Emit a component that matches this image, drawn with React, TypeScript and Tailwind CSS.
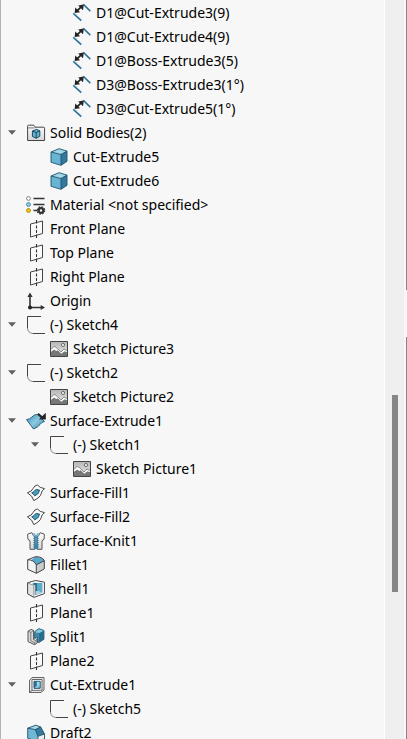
import { useState, type ReactNode } from "react";

type Kind =
  | "dimension" | "folder" | "body" | "material" | "plane" | "origin" | "sketch" | "picture"
  | "surfaceExtrude" | "surfaceFill" | "knit" | "fillet" | "shell" | "split" | "cut" | "draft";

type Feature = { label: string; kind: Kind; children?: Feature[] };

const dimensions: Feature[] = [
  { label: "D1@Cut-Extrude3(9)", kind: "dimension" },
  { label: "D1@Cut-Extrude4(9)", kind: "dimension" },
  { label: "D1@Boss-Extrude3(5)", kind: "dimension" },
  { label: "D3@Boss-Extrude3(1°)", kind: "dimension" },
  { label: "D3@Cut-Extrude5(1°)", kind: "dimension" },
];

const features: Feature[] = [
  {
    label: "Solid Bodies(2)",
    kind: "folder",
    children: [
      { label: "Cut-Extrude5", kind: "body" },
      { label: "Cut-Extrude6", kind: "body" },
    ],
  },
  { label: "Material <not specified>", kind: "material" },
  { label: "Front Plane", kind: "plane" },
  { label: "Top Plane", kind: "plane" },
  { label: "Right Plane", kind: "plane" },
  { label: "Origin", kind: "origin" },
  { label: "(-) Sketch4", kind: "sketch", children: [{ label: "Sketch Picture3", kind: "picture" }] },
  { label: "(-) Sketch2", kind: "sketch", children: [{ label: "Sketch Picture2", kind: "picture" }] },
  {
    label: "Surface-Extrude1",
    kind: "surfaceExtrude",
    children: [
      { label: "(-) Sketch1", kind: "sketch", children: [{ label: "Sketch Picture1", kind: "picture" }] },
    ],
  },
  { label: "Surface-Fill1", kind: "surfaceFill" },
  { label: "Surface-Fill2", kind: "surfaceFill" },
  { label: "Surface-Knit1", kind: "knit" },
  { label: "Fillet1", kind: "fillet" },
  { label: "Shell1", kind: "shell" },
  { label: "Plane1", kind: "plane" },
  { label: "Split1", kind: "split" },
  { label: "Plane2", kind: "plane" },
  { label: "Cut-Extrude1", kind: "cut", children: [{ label: "(-) Sketch5", kind: "sketch" }] },
  { label: "Draft2", kind: "draft" },
];

const drawings: Record<Kind, ReactNode> = {
  dimension: (
    <>
      <path d="M10.3 .3l7 6.8M.3 9.3l8 7.4" stroke="#2b7397" strokeWidth="1.6" />
      <path d="M3.5 7.3l5.5-5.2" stroke="#222" strokeWidth="1.8" />
      <path d="M10.8.6L10 6.2 5.2 1.4zM1.6 9l.7-5.6 4.8 4.8z" fill="#222" />
    </>
  ),
  folder: (
    <>
      <path d="M.6 16.5V2.2q0-1 1-1h4.6q1 0 1.4 1l.4 1h8.6q1 0 1 1v12.3z" fill="url(#grey)" stroke="#444" />
      <path d="M1.2 3.9h6.3" stroke="#555" strokeWidth=".8" />
      <path d="M5.4 7l4-1.6 3.4 1.4v5.4l-3.6 2-3.8-1.7z" fill="#67b0cf" stroke="#174b62" />
      <path d="M5.4 7l3.8 1.6 3.6-1.8M9.2 8.6v5.6" fill="none" stroke="#174b62" />
    </>
  ),
  body: (
    <>
      <path d="M1 4l8-3.3 8 2.4v10.2l-6 4-10-3z" fill="#69b3d3" />
      <path d="M1 4l8-3.3 8 2.4-6 3.4z" fill="#a3d7ea" />
      <path d="M11 6.5l6-3.4v10.2l-6 4z" fill="#34799c" />
      <path d="M1 4l8-3.3 8 2.4v10.2l-6 4-10-3zM1 4l10 2.5 6-3.4M11 6.5v10.8" fill="none" stroke="#1f536d" strokeWidth=".9" strokeLinejoin="round" />
    </>
  ),
  material: (
    <>
      <path d="M6.5 2.5H17.5M6.5 8.5H17.5M6.5 14.5h4" stroke="#333" strokeWidth="1.4" />
      <circle cx="1.5" cy="2.5" r="1.9" fill="#fff" stroke="#777" strokeWidth=".9" />
      <circle cx="1.5" cy="8.5" r="1.9" fill="#8dd3ee" stroke="#397f9d" strokeWidth=".9" />
      <circle cx="1.5" cy="14.5" r="1.9" fill="#ffcd00" stroke="#a47a00" strokeWidth=".9" />
      <circle cx="14" cy="14.5" r="2.3" fill="none" stroke="#333" strokeWidth="2.2" />
      <circle cx="14" cy="14.5" r="3.7" fill="none" stroke="#333" strokeWidth="1.2" strokeDasharray="1.6 1.3" />
    </>
  ),
  plane: (
    <>
      <path d="M3.5 4l12-3v12.5l-12 3.5z" fill="#fafafa" stroke="#444" />
      <path d="M9.5 0v3.5M9.5 5.5v3M9.5 10v3M9.5 14.5V18" stroke="#333" strokeWidth="1.1" />
    </>
  ),
  origin: (
    <>
      <path d="M3 4v11.5h11" fill="none" stroke="#333" strokeWidth="1.6" />
      <path d="M3 .5L5.6 5H.4zM18 15.5L13.7 18v-5z" fill="#333" />
      <circle cx="3" cy="15.5" r="2" fill="#222" />
    </>
  ),
  sketch: (
    <>
      <path d="M14 .5H.5V12" fill="none" stroke="#444" />
      <path d="M.5 12q.3 5 5.5 5.5" fill="none" stroke="#888" />
      <path d="M6 17.5h12" stroke="#444" />
    </>
  ),
  picture: (
    <>
      <path d="M.5 1.5h17v15H.5z" fill="url(#photo)" stroke="#444" />
      <path d="M1 9.5l3.3-3.3 2.2 1.6L11 12l3-3 3 1.6V16H1z" fill="#777" />
      <path d="M1 9.5l3.3-3.3 2.2 1.6L11 12l3-3 3 1.6v1.6l-2.4-1-3.3 2.5-3.6-3.4L6 11 4.3 9.4 1 11.8z" fill="#fff" />
      <path d="M1 9.5l3.3-3.3 2.2 1.6L11 12l3-3 3 1.6" fill="none" stroke="#555" strokeWidth=".6" />
      <circle cx="13" cy="5" r="1.6" fill="#eee" stroke="#555" strokeWidth=".8" />
    </>
  ),
  surfaceExtrude: (
    <>
      <path d="M-.5 7.5Q2.5 7.5 4.5 5.3T10 2.2L17.5 9.5q-2.5.2-4.5 3T6.5 17z" fill="url(#blue)" stroke="#2b6480" strokeLinejoin="round" />
      <path d="M11 1.8l4 3.5" stroke="#222" strokeWidth="1.9" />
      <path d="M18.8.8v6.8h-7z" fill="#222" />
    </>
  ),
  surfaceFill: (
    <>
      <path d="M.4 8.8Q5 7.4 6.2 4.4T10.6 1q1.8 3 6.9 3.6-3 2.2-3.4 5.2T6.8 16.6Q5.6 11.6.4 8.8z" fill="#fcfcfc" stroke="#444" strokeLinejoin="round" />
      <path d="M4.6 8.8Q7 8.2 7.8 6.4t5-.2Q11.8 7.6 11.4 9t-3.8 2.8q-.8-1.8-3-3z" fill="#4c9abb" stroke="#174c66" strokeWidth=".9" strokeLinejoin="round" />
    </>
  ),
  knit: (
    <>
      <path d="M.7 2.2L4.8.7q1.2 3 3 4.4v12.2H3V8.7L.9 7.3zM17.3 2.2L13.2.7q-1.2 3-3 4.4v12.2H15V8.7l2.1-1.4z" fill="url(#grey)" stroke="#555" strokeLinejoin="round" />
      <path d="M7 4l4 2.2-4 2.2 4 2.2-4 2.2 4 2.2-4 2M11 4L7 6.2l4 2.2-4 2.2 4 2.2-4 2.2 4 2" fill="none" stroke="#3581a4" strokeWidth="1.1" />
      <path d="M6.6 1.2L9 4.4l2.4-3.2" fill="none" stroke="#5aa9c8" strokeWidth="1.2" />
    </>
  ),
  fillet: (
    <>
      <path d="M.7 3.8l8-3.2q6.4 0 8.6 4v8.3L9.5 17.3l-8.8-4z" fill="#f3f3f3" />
      <path d="M9.3 7.5l8-3v8.4L9.5 17.3z" fill="#c9cccd" />
      <path d="M8.2.9q6.8-.3 9.1 4l-8.1 4Q8 6 4.5 4z" fill="#58a7c8" />
      <path d="M.7 3.8l8-3.2q6.4 0 8.6 4v8.3L9.5 17.3l-8.8-4zM.7 3.8Q6.5 3.5 9.3 8.8v8.5M9.3 8.8l8-4.1" fill="none" stroke="#444" strokeLinejoin="round" />
    </>
  ),
  shell: (
    <>
      <path d="M.6 2.8L8.6.5l8.8 1.7v11.4L6.8 17.4.6 13.8z" fill="#fff" />
      <path d="M.6 2.8l6.2 2.7v11.9L.6 13.8z" fill="#dfe1e2" />
      <path d="M7.5 2.8l7.7.4v9.6L8.2 15V5.4L5 4z" fill="#2a6e8f" />
      <path d="M10 3l5.2.2v9.6L10 10z" fill="#5aabcc" />
      <path d="M8.2 11.4l3-1 4 2.4-7 2.2z" fill="#a9d6e7" />
      <path d="M.6 2.8L8.6.5l8.8 1.7v11.4L6.8 17.4.6 13.8z" stroke="#444" strokeLinejoin="round" />
      <path d="M.6 2.8l6.2 2.7v11.9M8.2 15V5.4" stroke="#777" strokeWidth=".7" />
    </>
  ),
  split: (
    <>
      <path d="M7.6 3.6L12 .6l5 1.9v8.7l-5 3.4-1.6-.8V9.5l-2.8 1z" fill="#3d89ab" stroke="#1c5570" strokeWidth=".8" strokeLinejoin="round" />
      <path d="M12.2 5l4.4-2.2v8.1l-4.4 3.1z" fill="#2a6c8c" />
      <path d="M8.2 3.7L12 1.2l4.4 1.6L12.2 5l-1.4-.6-1.2.6z" fill="#8dcae0" />
      <path d="M1 3.2L4.2 1.4l2.4 1v9.2l1.8.8 2-1v3.4l-2.9 1.9L1 13.6z" fill="#dadbdc" stroke="#444" strokeWidth=".9" strokeLinejoin="round" />
      <path d="M1 3.2l2.8 1.2v8.4l3.8 1.8 2.8-1.6M3.8 4.4l2.8-2M7.6 14.6v2" stroke="#666" strokeWidth=".8" />
    </>
  ),
  cut: (
    <>
      <path d="M2.5 4.5L5 1.5h12V14l-3 2.5H2.5z" fill="#e6e6e6" stroke="#666" strokeLinejoin="round" />
      <path d="M5 3.5h10v10.8H5z" fill="#fff" stroke="#666" />
      <path d="M7 5.3h6.2v7H7z" fill="#2c7598" stroke="#295468" />
      <path d="M9.8 5.8h2.9v5.4l-2.9-1.7zM7.5 11.8l2.3-2 2.9 2z" fill="#98d6ed" />
      <path d="M2.5 4.5v12M2.5 16.5L5 14.3" stroke="#666" />
    </>
  ),
  draft: (
    <>
      <path d="M.7 4.2l8-3 5 1.8 3.8 7v5l-7 2.5-9.8-3.2z" fill="#6eb8d5" />
      <path d="M.7 4.2l8-3 5 1.8-5.4 2.6z" fill="#a7d9ea" />
      <path d="M8.3 5.6L13.7 3l3.8 7-6.6 2.3z" fill="#347b9e" />
      <path d="M10.9 12.3l6.6-2.3v5l-6.8 2.5z" fill="#eee" />
      <path d="M.7 4.2l8-3 5 1.8 3.8 7v5l-7 2.5-9.8-3.2zM.7 4.2l7.6 1.4 2.6 6.7v5.2M8.3 5.6L13.7 3M10.9 12.3l6.6-2.3" fill="none" stroke="#254f63" strokeWidth=".9" strokeLinejoin="round" />
    </>
  ),
};

function FeatureIcon({ kind }: { kind: Kind }) {
  return (
    <svg viewBox="0 0 18 18" className="size-[18px] shrink-0 overflow-visible" fill="none" aria-hidden="true">
      {drawings[kind]}
    </svg>
  );
}

function TreeNode({ feature }: { feature: Feature }) {
  const [open, setOpen] = useState(true);
  return (
    <li role="treeitem" aria-expanded={feature.children ? open : undefined}>
      <div className="flex h-6 items-center">
        {feature.children ? (
          <button
            type="button"
            aria-label={`Toggle ${feature.label}`}
            onClick={() => setOpen(!open)}
            className="flex h-6 w-[23px] shrink-0 items-center pb-0.5 pl-1"
          >
            <svg viewBox="0 0 8 5" className={open ? "h-[5px] w-2" : "h-[5px] w-2 -rotate-90"} aria-hidden="true">
              <path d="M0 .3h8L4 4.7z" fill="#606060" />
            </svg>
          </button>
        ) : (
          <span className="w-[23px] shrink-0" />
        )}
        <FeatureIcon kind={feature.kind} />
        <span className="pl-[5px] whitespace-nowrap">{feature.label}</span>
      </div>
      {feature.children && open && (
        <ul role="group" className="pl-[23px]">
          {feature.children.map((child) => (
            <TreeNode key={child.label} feature={child} />
          ))}
        </ul>
      )}
    </li>
  );
}

function Gradients() {
  return (
    <svg className="absolute size-0" aria-hidden="true">
      <defs>
        <linearGradient id="grey" x1="0" y1="0" x2="0" y2="1">
          <stop offset="0" stopColor="#fff" />
          <stop offset="1" stopColor="#d2d4d5" />
        </linearGradient>
        <linearGradient id="photo" x1="0" y1="0" x2="0" y2="1">
          <stop offset="0" stopColor="#b5b5b5" />
          <stop offset="1" stopColor="#eee" />
        </linearGradient>
        <linearGradient id="blue" x1="0" y1="0" x2="1" y2="1">
          <stop offset="0" stopColor="#3e88aa" />
          <stop offset=".5" stopColor="#8bcbe2" />
          <stop offset="1" stopColor="#327b9e" />
        </linearGradient>
      </defs>
    </svg>
  );
}

export default function App() {
  return (
    <div className="flex h-screen overflow-hidden bg-[#f7f7f7] font-['Noto_Sans',sans-serif] text-sm text-black">
      <Gradients />
      <main className="min-w-0 flex-1 overflow-hidden border-l border-[#b4b4b4] pt-px pl-[3px]">
        <ul role="tree" aria-label="Feature tree">
          <li role="none">
            <ul role="group" className="pl-[46px]">
              {dimensions.map((item) => (
                <TreeNode key={item.label} feature={item} />
              ))}
            </ul>
          </li>
          {features.map((item) => (
            <TreeNode key={item.label} feature={item} />
          ))}
        </ul>
      </main>
      <div className="flex w-5 shrink-0 flex-col items-center border-l border-white bg-[#efefef] pl-px">
        <div className="grow-[395]" />
        <div className="w-1.5 grow-[197] bg-[#868686]" />
        <div className="grow-[147]" />
      </div>
      <div className="flex w-[3px] shrink-0 flex-col items-end">
        <div className="w-px grow-[290] bg-[#868686]" />
        <div className="grow-[47]" />
        <div className="w-px grow-[402] bg-[#868686]" />
      </div>
    </div>
  );
}
